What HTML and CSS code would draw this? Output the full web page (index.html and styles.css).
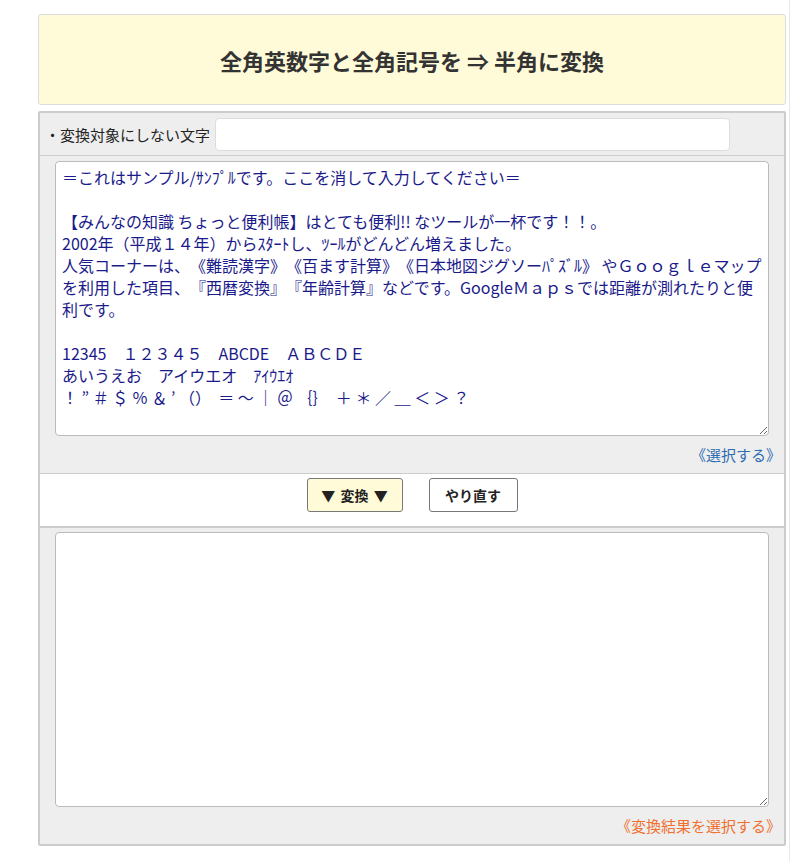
FILE: index.html
```html
<!doctype html>
<html lang="ja">
    <head>
        <meta charset="utf-8">
        <title>全角英数字と全角記号を半角に変換</title>
        <link rel="stylesheet" href="styles.css">
    </head>
    <body>
        <div class="page">
            <div class="wrap">
                <h1 class="title">全角英数字と全角記号を ⇒ 半角に変換</h1>

                <div class="panel">
                    <div class="opt-row">
                        <label class="opt-label" for="ignore">・変換対象にしない文字</label>
                        <input type="text" id="ignore" class="opt-input">
                    </div>

                    <div class="box">
                        <textarea class="area area-in" spellcheck="false">
＝これはサンプル/ｻﾝﾌﾟﾙです。ここを消して入力してください＝

【みんなの知識 ちょっと便利帳】はとても便利!! なツールが一杯です！！。
2002年（平成１４年）からｽﾀｰﾄし、ﾂｰﾙがどんどん増えました。
人気コーナーは、《難読漢字》《百ます計算》《日本地図ジグソーﾊﾟｽﾞﾙ》 やＧｏｏｇｌｅマップを利用した項目、『西暦変換』『年齢計算』などです。GoogleＭａｐｓでは距離が測れたりと便利です。

12345　１２３４５　ABCDE　ＡＢＣＤＥ
あいうえお　アイウエオ　ｱｲｳｴｵ
！ ” ＃ ＄ ％ ＆ ’ （）  ＝ ～ ｜ ＠ ｛｝  ＋ ＊ ／ ＿ ＜ ＞ ？</textarea>
                        <div class="box-foot">
                            <a class="pick pick-in" href="#">《選択する》</a>
                        </div>
                    </div>

                    <div class="actions">
                        <button class="btn btn-go">▼ 変換 ▼</button>
                        <button class="btn btn-reset">やり直す</button>
                    </div>

                    <div class="box box-last">
                        <textarea class="area area-out" spellcheck="false"></textarea>
                        <div class="box-foot">
                            <a class="pick pick-out" href="#">《変換結果を選択する》</a>
                        </div>
                    </div>
                </div>
            </div>
        </div>
    </body>
</html>
```

FILE: styles.css
```css
html, body{
    margin: 0;
    padding: 0;
    background: #fff;
}
body{
    color: #333;
    font-family: "Noto Sans CJK JP", "Noto Sans", sans-serif;
    text-spacing-trim: space-all;
}
.page{
    width: 790px;
    min-height: 861px;
    border-right: 1px solid #e8e8e8;
    box-sizing: border-box;
    padding-top: 14px;
}
.wrap{
    width: 748px;
    margin-left: 38px;
}

/* HEADER */
.title{
    margin: 0;
    height: 91px;
    box-sizing: border-box;
    display: flex;
    align-items: center;
    justify-content: center;
    background: #fffad7;
    border: 1px solid #ddd;
    border-radius: 3px;
    font-size: 22px;
    font-weight: bold;
    color: #333;
}

/* PANEL */
.panel{
    margin-top: 6px;
    background: #eee;
    border: 2px solid #ccc;
    border-radius: 2px;
}
.opt-row{
    display: flex;
    align-items: center;
    height: 42px;
    padding: 0 0 0 5px;
    border-bottom: 1px solid #ccc;
}
.opt-label{
    font-size: 15px;
    color: #222;
    margin-right: 5px;
}
.opt-input{
    width: 515px;
    height: 33px;
    box-sizing: border-box;
    border: 1px solid #ddd;
    border-radius: 4px;
    background: #fff;
    outline: none;
}

.box{
    padding: 5px 15px 0 15px;
}
.box-last{
    padding-top: 4px;
}
.area{
    display: block;
    width: 714px;
    height: 275px;
    box-sizing: border-box;
    margin: 0;
    padding: 4px 6px;
    border: 1px solid #bbb;
    border-radius: 4px;
    background: #fff;
    font-family: "Noto Sans CJK JP", "Noto Sans", sans-serif;
    font-size: 16px;
    line-height: 22px;
    color: #1a1a8a;
    text-spacing-trim: space-all;
    outline: none;
}
.box-foot{
    display: flex;
    justify-content: flex-end;
    align-items: center;
    height: 37px;
    margin-right: -12px;
}
.pick{
    font-size: 15px;
    text-decoration: none;
}
.pick-in{
    color: #2f6db3;
}
.pick-out{
    color: #f0702f;
}

/* BUTTONS */
.actions{
    display: flex;
    justify-content: center;
    gap: 26px;
    padding: 4px 0 14px;
    background: #fff;
    border-top: 1px solid #ccc;
    border-bottom: 2px solid #ccc;
}
.btn{
    height: 34px;
    box-sizing: border-box;
    border: 1px solid #777;
    border-radius: 3px;
    font-family: "Noto Sans CJK JP", "Noto Sans", sans-serif;
    font-size: 14px;
    font-weight: bold;
    word-spacing: 2px;
    color: #222;
    cursor: pointer;
}
.btn-go{
    width: 96px;
    background: #fffad7;
}
.btn-reset{
    width: 89px;
    background: #fff;
}
```
